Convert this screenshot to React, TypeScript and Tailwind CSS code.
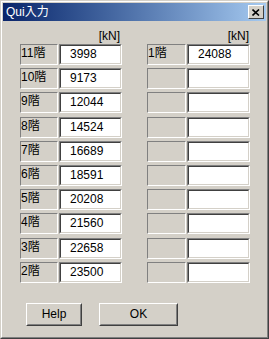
import React from "react";

const left = [
  ["11階", "3998"],
  ["10階", "9173"],
  ["9階", "12044"],
  ["8階", "14524"],
  ["7階", "16689"],
  ["6階", "18591"],
  ["5階", "20208"],
  ["4階", "21560"],
  ["3階", "22658"],
  ["2階", "23500"],
];

const right = [["1階", "24088"], ...Array.from({ length: 9 }, () => ["", ""])];

function Field({ value }: { value: string }) {
  return (
    <div className="w-[63px] h-[21px] border border-t-[#808080] border-l-[#808080] border-b-white border-r-white">
      <div className="h-full border border-t-[#404040] border-l-[#404040] border-b-[#d4d0c8] border-r-[#d4d0c8] bg-white pl-[9px] leading-[17px]">
        {value}
      </div>
    </div>
  );
}

function Column({ rows, labelW, gap, pr }: { rows: string[][]; labelW: string; gap: string; pr: string }) {
  return (
    <div className="flex flex-col">
      <div className={`h-[16px] text-right leading-[16px] ${pr}`}>[kN]</div>
      <div className="flex flex-col gap-[3.2px]">
        {rows.map(([label, value], i) => (
          <div key={i} className={`flex ${gap}`}>
            <div className={`${labelW} h-[21px] border border-t-[#808080] border-l-[#808080] border-b-white border-r-white leading-[16px]`}>
              {label}
            </div>
            <Field value={value} />
          </div>
        ))}
      </div>
    </div>
  );
}

function Button({ label, w }: { label: string; w: string }) {
  return (
    <div className={`${w} h-[23px] border border-t-white border-l-white border-b-[#404040] border-r-[#404040]`}>
      <div className="h-full border border-t-[#d4d0c8] border-l-[#d4d0c8] border-b-[#808080] border-r-[#808080] flex items-center justify-center">
        {label}
      </div>
    </div>
  );
}

export default function App() {
  return (
    <div
      className="w-[269px] h-[339px] bg-[#d4d0c8] text-black text-[12px] border border-t-[#d4d0c8] border-l-[#d4d0c8] border-b-[#404040] border-r-[#404040]"
      style={{ fontFamily: '"Liberation Sans", "Noto Sans CJK JP", sans-serif' }}
    >
      <div className="h-full border border-t-white border-l-white border-b-[#808080] border-r-[#808080] p-[1px] flex flex-col">
        <div className="h-[18px] bg-gradient-to-r from-[#0a246a] to-[#a6caf0] flex items-center justify-between pl-[3px] pr-[2px]">
          <span className="text-white text-[12px] leading-[18px]">Qui入力</span>
          <div className="w-[16px] h-[14px] bg-[#d4d0c8] border border-t-white border-l-white border-b-[#404040] border-r-[#404040] flex items-center justify-center">
            <svg width="8" height="7" viewBox="0 0 8 7">
              <path d="M0.5 0.5 L7 6.5 M7 0.5 L0.5 6.5" stroke="#000" strokeWidth="1.6" />
            </svg>
          </div>
        </div>
        <div className="flex gap-[25px] pl-[17px] pt-[7px]">
          <Column rows={left} labelW="w-[38px]" gap="gap-[1px]" pr="pr-[2px]" />
          <Column rows={right} labelW="w-[39px]" gap="gap-[1px]" pr="pr-[1px]" />
        </div>
        <div className="flex gap-[17px] pl-[23px] mt-[20px]">
          <Button label="Help" w="w-[56px]" />
          <Button label="OK" w="w-[79px]" />
        </div>
      </div>
    </div>
  );
}
